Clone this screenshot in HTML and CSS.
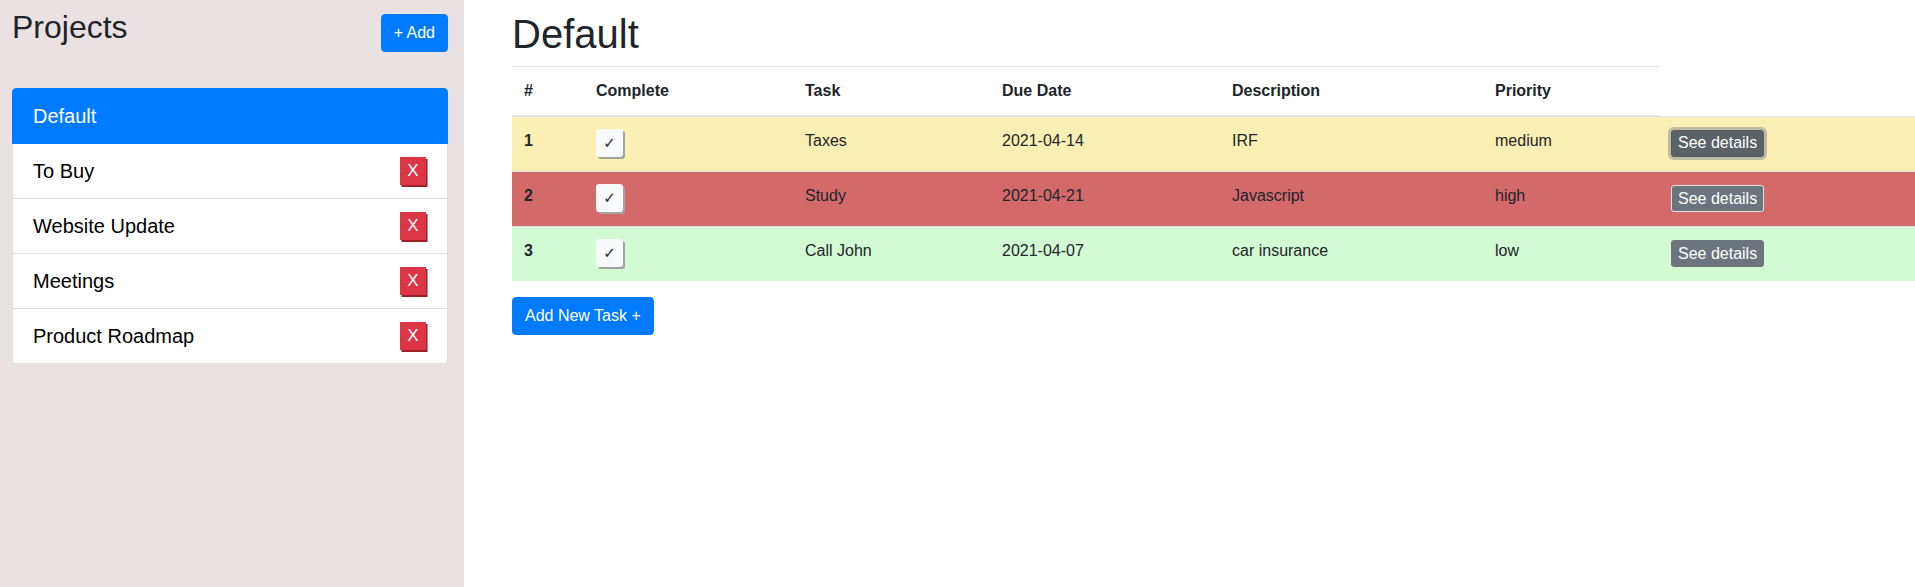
FILE: index.html
```html
<!DOCTYPE html>
<html lang="en">
<head>
<meta charset="utf-8">
<title>Projects</title>
<link rel="stylesheet" href="styles.css">
</head>
<body>
<div class="app">
  <aside class="sidebar">
    <div class="sidebar-head">
      <h2 class="sidebar-title">Projects</h2>
      <button class="btn btn-primary">+ Add</button>
    </div>
    <ul class="project-list">
      <li class="project active"><span>Default</span></li>
      <li class="project"><span>To Buy</span><button class="del">X</button></li>
      <li class="project"><span>Website Update</span><button class="del">X</button></li>
      <li class="project"><span>Meetings</span><button class="del">X</button></li>
      <li class="project"><span>Product Roadmap</span><button class="del">X</button></li>
    </ul>
  </aside>
  <main class="main">
    <h1 class="page-title">Default</h1>
    <table class="tasks">
      <colgroup>
        <col class="c1"><col class="c2"><col class="c3"><col class="c4"><col class="c5"><col class="c6"><col class="c7">
      </colgroup>
      <thead>
        <tr>
          <th>#</th><th>Complete</th><th>Task</th><th>Due Date</th><th>Description</th><th>Priority</th>
        </tr>
      </thead>
      <tbody>
        <tr class="prio-medium">
          <th>1</th>
          <td><button class="check">✓</button></td>
          <td>Taxes</td><td>2021-04-14</td><td>IRF</td><td>medium</td>
          <td><button class="details focus">See details</button></td>
        </tr>
        <tr class="prio-high">
          <th>2</th>
          <td><button class="check">✓</button></td>
          <td>Study</td><td>2021-04-21</td><td>Javascript</td><td>high</td>
          <td><button class="details light-border">See details</button></td>
        </tr>
        <tr class="prio-low">
          <th>3</th>
          <td><button class="check">✓</button></td>
          <td>Call John</td><td>2021-04-07</td><td>car insurance</td><td>low</td>
          <td><button class="details">See details</button></td>
        </tr>
      </tbody>
    </table>
    <button class="btn btn-primary">Add New Task +</button>
  </main>
</div>
</body>
</html>
```

FILE: styles.css
```css
* { box-sizing: border-box; }

html, body {
  margin: 0;
  padding: 0;
}

body {
  font-family: "Liberation Sans", Arial, sans-serif;
  font-size: 16px;
  line-height: 1.5;
  color: #212529;
  background: #fff;
}

.app {
  display: flex;
  min-height: 100vh;
}

/* ---------- Sidebar ---------- */
.sidebar {
  width: 464px;
  flex: none;
  background: #eae2e2;
  padding: 8px 16px 0 12px;
}

.sidebar-head {
  display: flex;
  justify-content: space-between;
  align-items: flex-start;
}

.sidebar-title {
  margin: 0;
  font-size: 32px;
  line-height: 38.4px;
  font-weight: 400;
  color: #212529;
}

.sidebar-head .btn {
  margin-top: 6px;
}

.btn {
  font-family: inherit;
  font-size: 16px;
  line-height: 24px;
  padding: 6px 12px;
  border: 1px solid transparent;
  border-radius: 4px;
  cursor: pointer;
}

.btn-primary {
  background: #007bff;
  border-color: #007bff;
  color: #fff;
}

.project-list {
  list-style: none;
  margin: 36px 0 0;
  padding: 0;
  background: #fff;
  border-radius: 4px;
}

.project {
  display: flex;
  justify-content: space-between;
  align-items: center;
  padding: 12px 20px;
  font-size: 20px;
  line-height: 30px;
  color: #000;
  border: 1px solid rgba(0, 0, 0, 0.125);
  border-top-width: 0;
}

.project:first-child {
  border-top-width: 1px;
  border-radius: 4px 4px 0 0;
}

.project:last-child {
  border-radius: 0 0 4px 4px;
}

.project.active {
  background: #007bff;
  border-color: #007bff;
  color: #fff;
}

.del {
  width: 26px;
  height: 28px;
  margin-right: 1px;
  padding: 0;
  border: 0;
  background: #dc3545;
  color: #fff;
  font-family: inherit;
  font-size: 17px;
  line-height: 28px;
  box-shadow: 1.5px 2px 0 #a01d2a;
}

/* ---------- Main ---------- */
.main {
  flex: 1;
  padding: 10px 0 0 48px;
  min-width: 0;
}

.page-title {
  margin: 0 0 8px;
  font-size: 40px;
  line-height: 48px;
  font-weight: 400;
  color: #212529;
}

.tasks {
  width: 100%;
  table-layout: fixed;
  border-collapse: collapse;
  margin-bottom: 16px;
}

.c1 { width: 72px; }
.c2 { width: 209px; }
.c3 { width: 197px; }
.c4 { width: 230px; }
.c5 { width: 263px; }
.c6 { width: 176px; }
.c7 { width: 256px; }

.tasks th,
.tasks td {
  padding: 12px;
  text-align: left;
  vertical-align: top;
  border-top: 1px solid #dee2e6;
}

.tasks thead th {
  vertical-align: bottom;
  border-bottom: 2px solid #dee2e6;
  font-weight: 700;
}

.tasks tbody th {
  font-weight: 700;
}

.prio-medium { background: #fbefb3; }
.prio-high { background: #d4696a; }
.prio-low { background: #d2fad3; }

.check {
  display: block;
  width: 27px;
  height: 28px;
  margin-bottom: 2px;
  padding: 0;
  border: 0;
  border-radius: 3px;
  background: #f8f9fa;
  color: #212529;
  font-family: "DejaVu Sans", sans-serif;
  font-size: 15px;
  line-height: 28px;
  text-align: center;
  box-shadow: 2px 2px 0 #a3a3a3;
}

.details {
  display: block;
  height: 27px;
  margin-top: 1px;
  padding: 0 6px;
  border: 1px solid #6c757d;
  border-radius: 3px;
  background: #6c757d;
  color: #fff;
  font-family: inherit;
  font-size: 16px;
  line-height: 24px;
}

.details.focus {
  background: #5a6268;
  border-color: #545b62;
  box-shadow: 0 0 0 3px rgba(130, 138, 145, 0.5);
}

.details.light-border {
  border-color: #e4e4e4;
}
```
